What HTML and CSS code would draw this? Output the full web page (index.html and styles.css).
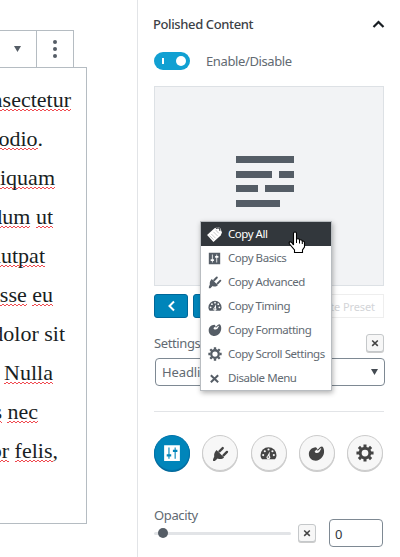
FILE: index.html
```html
<!DOCTYPE html>
<html lang="en">
<head>
<meta charset="utf-8">
<title>Polished Content</title>
<link rel="stylesheet" href="styles.css">
</head>
<body>
<svg class="defs" width="0" height="0" aria-hidden="true">
  <symbol id="tag" viewBox="0 0 16 16"><path fill="currentColor" d="M1 8.500 8 2l3.500-1 2 1.200L15 6l-1.200 3L7 15z"/><path d="m5 7.500 4 4M7 5.500l4 4M3.300 9l4 4M9 3.600l3 3.300" stroke="#a5a8ab" stroke-width=".6"/><path d="M9.500 2.500c1.500-1.500 4-.6 3.500 2" fill="none" stroke="#32373c"/></symbol>
  <symbol id="sliders" viewBox="0 0 16 16"><path fill="currentColor" fill-rule="evenodd" d="M1 1h14v14H1zM4.800 3v6H3.300v2h1.500v2h1v-2h1.500V9H5.800V3zM10.300 3v2H8.800v2h1.500v6h1V7h1.500V5h-1.500V3z"/></symbol>
  <symbol id="plug" viewBox="0 0 16 16"><path fill="currentColor" d="m4.300 4.700 7 7c-1.600 1.600-4 1.900-6 .9L2.700 15 1 15v-1.700l1.100-2.500c-.5-2.200.5-4.500 2.200-6.100z"/><path d="m7 6 3.100-3.100M10.800 9.800l3.300-3.300" stroke="currentColor" stroke-width="2.200" stroke-linecap="round"/></symbol>
  <symbol id="gauge" viewBox="0 0 16 16"><path fill="currentColor" d="M2 13.500C.8 12.200.5 11 .5 9.500a7.500 7.500 0 0 1 15 0c0 1.500-.3 2.700-1.500 4z"/><g fill="var(--cut)"><circle cx="3" cy="9.500" r="1"/><circle cx="4.500" cy="5.900" r="1"/><circle cx="8" cy="4.200" r="1"/><circle cx="11.700" cy="5.900" r="1"/><circle cx="13" cy="9.500" r="1"/><path d="m9.200 6-.1 4.200a1.800 1.800 0 1 1-2.100-.2z"/></g><circle cx="7.800" cy="11.200" r=".7" fill="currentColor"/></symbol>
  <symbol id="palette" viewBox="0 0 16 16"><path fill="currentColor" d="M7.500 2C3.300 2.300.8 5 .8 8.500c0 3.800 3 6.300 6.500 6.300 4.500 0 8.200-4.500 7.800-9.300C15 3.500 14.300 2 13.200 1.500c-1.700 0-2.700 1.800-4 2.500z"/><path fill="var(--cut)" d="M8.100 1c1.300 1 1.200 2.800-.2 3.600-1 .6-1.700.8-1.500 1.700.4 1.500 3 1.500 4.300.2.900-.9.900-2.100 1.900-2.900l-.7-.6-2.700 2.400-.8-.8 1.800-1.800z"/></symbol>
  <symbol id="gear" viewBox="0 0 16 16"><g stroke="currentColor"><circle cx="8" cy="8" r="4.300" fill="none" stroke-width="2.600"/><path d="M8 .4v2.400M8 13.200v2.400M.4 8h2.400M13.200 8h2.400M2.600 2.600l1.700 1.700M11.700 11.700l1.700 1.700M13.400 2.600l-1.700 1.700M4.300 11.700l-1.700 1.700" stroke-width="2.700"/></g></symbol>
  <symbol id="cross" viewBox="0 0 16 16"><path d="m3.500 4 9 8.500m0-8.500-9 8.500" stroke="currentColor" stroke-width="2.500"/></symbol>
</svg>
<div class="app">
  <main class="editor">
    <div class="toolbar">
      <div class="tool tool-select"><svg width="8" height="6"><path d="M0 0h7L3.500 6z" fill="#555d66"/></svg></div>
      <div class="tool tool-more"><i></i><i></i><i></i></div>
    </div>
    <div class="block">
      <p class="w71"><u>nsectetur</u></p>
      <p class="w43"><u>odio</u>.</p>
      <p class="w55"><u>iquam</u></p>
      <p class="w53"><u>dum</u>&nbsp;<u>ut</u></p>
      <p class="w45"><u>lutpat</u></p>
      <p class="w53"><u>sse</u>&nbsp;<u>eu</u></p>
      <p class="w65">dolor sit</p>
      <p class="w53"><u>Nulla</u></p>
      <p class="w38"><u>s</u>&nbsp;<u>nec</u></p>
      <p class="w58"><u>or</u>&nbsp;<u>felis</u>,</p>
    </div>
  </main>
  <aside class="sidebar">
    <header class="panel-head"><h2>Polished Content</h2><svg width="13" height="9"><path d="m1.500 7 5-5 5 5" fill="none" stroke="#191e23" stroke-width="2.200"/></svg></header>
    <div class="enable"><span class="toggle"><i></i><b></b></span><span class="enable-text">Enable/Disable</span></div>
    <div class="preview">
      <div class="bars"><i class="b58"></i></div>
      <div class="bars"><i class="b36"></i><i class="b15"></i></div>
      <div class="bars"><i class="b22"></i><i class="b29"></i></div>
      <div class="bars"><i class="b44"></i></div>
    </div>
    <div class="actions"><button class="nav"><svg width="9" height="12"><path d="M7 1.500 2.500 6 7 10.500" fill="none" stroke="#fff" stroke-width="2"/></svg></button><button class="nav"></button><button class="preset" disabled>Create Preset</button></div>
    <div class="settings-head"><span class="label">Settings</span><button class="clear"><svg width="10" height="10"><use href="#cross"/></svg></button></div>
    <div class="select"><span>Headline</span><svg width="7" height="6"><path d="M0 0h7L3.500 6z" fill="#444b52"/></svg></div>
    <hr>
    <nav class="tabs">
      <button class="tab active"><svg width="18" height="18"><use href="#sliders"/></svg></button>
      <button class="tab"><svg width="17" height="17"><use href="#plug"/></svg></button>
      <button class="tab"><svg width="17" height="17"><use href="#gauge"/></svg></button>
      <button class="tab"><svg width="17" height="17"><use href="#palette"/></svg></button>
      <button class="tab"><svg width="18" height="18"><use href="#gear"/></svg></button>
    </nav>
    <div class="label opacity-label">Opacity</div>
    <div class="range"><div class="track"><i></i></div><button class="clear"><svg width="10" height="10"><use href="#cross"/></svg></button><div class="number">0</div></div>
  </aside>
  <div class="menu">
    <div class="item current"><svg width="17" height="17"><use href="#tag"/></svg><span>Copy All</span></div>
    <div class="item"><svg width="13" height="13"><use href="#sliders"/></svg><span>Copy Basics</span></div>
    <div class="item"><svg width="14" height="14"><use href="#plug"/></svg><span>Copy Advanced</span></div>
    <div class="item"><svg width="14" height="14"><use href="#gauge"/></svg><span>Copy Timing</span></div>
    <div class="item"><svg width="14" height="14"><use href="#palette"/></svg><span>Copy Formatting</span></div>
    <div class="item"><svg width="14" height="14"><use href="#gear"/></svg><span>Copy Scroll Settings</span></div>
    <div class="item"><svg width="13" height="13"><use href="#cross"/></svg><span>Disable Menu</span></div>
  </div>
  <svg class="pointer" width="18" height="23"><path d="M5.500 14V2.500Q5.500 1 7 1t1.500 1.500V8q2.500-.8 3 1 2.300-.7 2.800 1 2.200-.3 2.200 2V16L14.500 19v2.500h-8V19L1.500 13q-1-2 .8-2.300Q4 11 5.500 14z" fill="#fff" stroke="#000" stroke-width="1.100"/><path d="M8.500 8v4M11.500 9v3.500M14.300 10v3" stroke="#000"/></svg>
</div>
</body>
</html>
```
FILE: styles.css
```css
* { box-sizing: border-box; }
body { margin: 0; background: #fff; font-family: "Noto Sans", sans-serif; font-size: 13px; letter-spacing: -.38px; color: #626a72; }
button { padding: 0; font: inherit; letter-spacing: inherit; display: flex; align-items: center; justify-content: center; }
.defs { position: absolute; }
.app { position: relative; display: flex; width: 400px; height: 557px; overflow: hidden; }

.editor { width: 137px; padding-top: 30px; }
.toolbar { display: flex; height: 37px; width: 74px; border: 1px solid #b5bcc2; border-width: 1px 1px 0 0; }
.tool { display: flex; align-items: center; justify-content: center; }
.tool-select { width: 37px; border-right: 1px solid #b5bcc2; }
.tool-more { width: 36px; flex-direction: column; gap: 3px; }
.tool-more i { width: 4px; height: 4px; border-radius: 50%; background: #555d66; }
.block { width: 87px; height: 457px; padding-top: 12px; border: 1px solid #b5bcc2; border-left: 0; overflow: hidden; font: 22px/39px "Liberation Serif", serif; letter-spacing: 0; color: #191e23; }
.block p { display: flex; justify-content: flex-end; margin: 0; height: 39px; white-space: nowrap; }
.block u { text-decoration: none; height: 31px; background: linear-gradient(135deg, transparent 35%, #f04a50 35% 65%, transparent 65%) 0 100% / 4px 2px repeat-x, linear-gradient(45deg, transparent 35%, #f04a50 35% 65%, transparent 65%) 2px 100% / 4px 2px repeat-x; }
.w71 { width: 71px; } .w65 { width: 65px; } .w58 { width: 58px; } .w55 { width: 55px; }
.w53 { width: 53px; } .w45 { width: 45px; } .w43 { width: 43px; } .w38 { width: 38px; }

.sidebar { width: 263px; border-left: 1px solid #e2e4e7; padding: 13px 15px 0 16px; }
.panel-head { display: flex; height: 22px; align-items: center; justify-content: space-between; margin-left: -1px; }
.panel-head h2 { margin: 0; font-size: 13px; font-weight: 500; color: #3c4146; }
.enable { display: flex; align-items: center; height: 18px; margin-top: 17px; gap: 16px; }
.toggle { display: flex; align-items: center; justify-content: space-between; width: 36px; height: 18px; padding: 0 4px 0 8px; border-radius: 9px; background: #11a0d2; }
.toggle i { width: 2px; height: 6px; background: #fff; }
.toggle b { width: 10px; height: 10px; border-radius: 50%; background: #fff; }
.preview { width: 230px; height: 200px; margin-top: 16px; padding: 69px 0 0 81px; border: 1px solid #dde1e5; background: #f2f3f5; }
.bars { display: flex; gap: 7px; height: 7px; margin-bottom: 7.500px; }
.bars i { background: #555d66; }
.b58 { width: 58px; } .b36 { width: 36px; } .b15 { width: 15px; } .b22 { width: 22px; } .b29 { width: 29px; } .b44 { width: 44px; }
.actions { display: flex; gap: 5px; width: 230px; height: 24px; margin-top: 8px; }
.nav { width: 34px; border: 1px solid #006799; border-radius: 3px; background: #0085ba; }
.preset { flex: 1; justify-content: flex-end; padding-right: 8px; border: 1px solid #eee; background: #fff; color: #d3d5d8; font-size: 11px; letter-spacing: -.1px; }
.settings-head { display: flex; justify-content: space-between; align-items: center; width: 230px; height: 18px; margin-top: 16px; }
.clear { width: 18px; height: 18px; border: 1px solid #c5c8ca; border-radius: 3px; background: #f7f7f7; box-shadow: 0 1px 0 #ccc; color: #444; }
.select { display: flex; align-items: center; justify-content: space-between; width: 230px; height: 28px; margin: 6px 0 0 1px; padding: 0 6px; border: 1px solid #7e8993; border-radius: 4px; letter-spacing: -.1px; }
hr { width: 230px; height: 1px; margin: 25px 0 23px; border: 0; background: #e2e4e7; }
.tabs { display: flex; justify-content: space-between; width: 229px; }
.tab { width: 36px; height: 36px; --cut: #f7f7f7; border: 1px solid #ccc; border-radius: 50%; background: #f7f7f7; box-shadow: 0 1px 0 #ccc; color: #444; }
.tab.active { border-color: #0073aa; background: #0085ba; box-shadow: 0 1px 0 #006799; color: #fff; }
.opacity-label { height: 18px; line-height: 18px; margin-top: 35px; }
.range { display: flex; align-items: center; height: 28px; margin-top: -5px; }
.track { display: flex; align-items: center; width: 137px; height: 3px; margin-right: 7px; padding-left: 4px; background: #e2e4e7; border-radius: 2px; }
.track i { width: 10px; height: 10px; border-radius: 50%; background: #555d66; }
.number { width: 54px; height: 28px; margin-left: 13px; padding-left: 5px; line-height: 28px; border: 1px solid #7e8993; border-radius: 4px; color: #32373c; }

.menu { position: absolute; left: 200px; top: 221px; width: 132px; height: 170px; border: 1px solid #b9bdc1; background: #fff; box-shadow: 1px 2px 5px rgba(0,0,0,.3); --cut: #fff; }
.item { display: grid; grid-template-columns: 27px 1fr; align-items: center; height: 24px; font-size: 11.500px; letter-spacing: -.46px; white-space: nowrap; }
.item span { padding-bottom: 2px; }
.item svg { justify-self: center; color: #555d66; }
.item.current { background: #32373c; color: #fff; }
.item.current svg { color: #fff; }
.pointer { position: absolute; left: 288px; top: 231px; }
```
